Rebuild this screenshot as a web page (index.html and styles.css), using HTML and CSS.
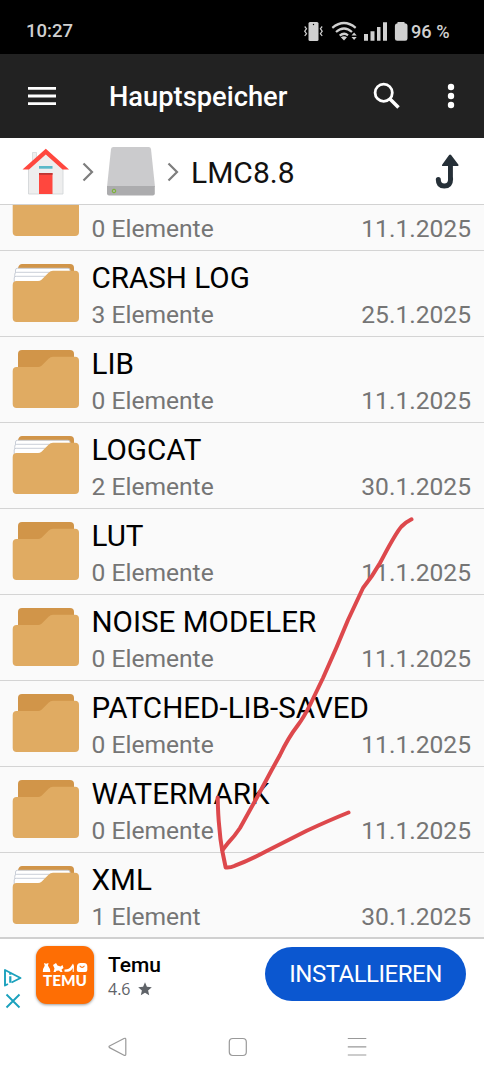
FILE: index.html
```html
<!DOCTYPE html>
<html lang="de">
<head>
  <meta charset="UTF-8">
  <meta name="viewport" content="width=device-width, initial-scale=1.0">
  <title>Hauptspeicher</title>
  <link rel="stylesheet" href="styles.css">
</head>
<body>

<!-- Icons -->
<svg class="defs" width="0" height="0">
  <symbol id="folder" viewBox="0 0 68 58">
    <path fill="#d19549" d="M6 20V4q0-4 4-4h48q4 0 4 4v14z"/>
    <path fill="#e0ab62" d="M.7 21q0-4 4-4H26q2 0 3.500-1.200l7-7Q38.500 6.700 41 6.700H63q4 0 4 4V54q0 4-4 4H4.700q-4 0-4-4z"/>
  </symbol>
  <symbol id="folder-full" viewBox="0 0 68 58">
    <path fill="#d19549" d="M6 4q1-4 4-4h48q4 0 4 4v14H6z"/>
    <path fill="#fff" stroke="#c3c8d2" stroke-width=".9" d="M3.500 20V6q0-1.700 2-1.700H56q2 0 2 2v10z"/>
    <path fill="#fff" stroke="#c3c8d2" stroke-width=".9" d="M2.800 21V10q0-1.700 2-1.700H50v6z"/>
    <path fill="#fff" stroke="#c3c8d2" stroke-width=".9" d="M2.200 21V14q0-1.700 2-1.700H40v6z"/>
    <path fill="#e0ab62" d="M.7 21q0-4 4-4H26q2 0 3.500-1.200l7-7Q38.500 6.700 41 6.700H63q4 0 4 4V54q0 4-4 4H4.700q-4 0-4-4z"/>
  </symbol>
</svg>

<div class="phone">
  <div class="status">
    <span class="time">10:27</span>
    <svg class="status-icons" width="106" height="22" viewBox="302 20 106 22" fill="#d0d0d0">
      <rect x="308.500" y="22" width="10" height="19" rx="1.500"/>
      <circle cx="313.500" cy="24.500" r=".7" fill="#000"/>
      <path fill="none" stroke="#d0d0d0" stroke-width="1.200" d="M304.700 26.500l1.800 2.200-1.800 2.500 1.800 2.500-1.800 2.300M322.200 26.500l-1.800 2.200 1.800 2.500-1.800 2.500 1.800 2.300"/>
      <g fill="none" stroke="#d0d0d0" stroke-width="2.200">
        <path d="M332.300 27.800Q344 18.200 355.700 27.800"/>
        <path d="M336 32Q344 25 352 32"/>
        <path d="M339.700 35.700Q344 32 348 35.300"/>
      </g>
      <path d="M340.800 37.300q3.200-2.300 6.200 0L344 40.500zM351.500 35.500l2.600-3 2.600 3zM351.500 37l2.600 3 2.600-3z"/>
      <path d="M364 34h4v6.700h-4zM370.500 31.300h4v9.400h-4zM377 27h3.500v13.700H377zM383 22.300h4v18.400h-4z"/>
      <path d="M397.500 22h7v1.300q3 .2 3 2.500V38.500q0 2.300-2.300 2.300h-8q-2.300 0-2.300-2.300V25.800q0-2.300 2.600-2.500z"/>
    </svg>
    <span class="battery">96 %</span>
  </div>

  <div class="appbar">
    <svg class="menu" width="28" height="20" fill="#fff"><path d="M0 1h28v2.800H0zM0 8.600h28v2.800H0zM0 16.200h28V19H0z"/></svg>
    <h1>Hauptspeicher</h1>
    <svg class="search" width="28" height="28" viewBox="0 0 28 28" fill="none" stroke="#fff">
      <circle cx="10.700" cy="10.700" r="8.600" stroke-width="2.800"/>
      <path stroke-width="3.500" d="M16.500 16.500l9 9"/>
    </svg>
    <svg class="more" width="8" height="26" fill="#fff"><circle cx="4" cy="4" r="3.200"/><circle cx="4" cy="13" r="3.200"/><circle cx="4" cy="22" r="3.200"/></svg>
  </div>

  <div class="path">
    <svg class="home" width="48" height="48" viewBox="22 147 48 48">
      <path fill="#eee" stroke="#cfd3d6" stroke-width=".7" d="M32.500 164v-11.500h4V160z"/>
      <path fill="#eee" stroke="#cfd3d6" stroke-width=".8" d="M28.500 194v-26L45.800 153 63 168v26z"/>
      <path fill="#ff473e" d="M45.800 148.700L69 169.500h-6.500L45.800 154.500 29 169.500h-6.500z"/>
      <path fill="#ff473e" d="M39 173h13.500v21H39z"/>
      <path fill="#bd3532" d="M39 173h13.500v1.800H39z"/>
      <path fill="#59b9c9" d="M39 166h13.500v2.700H39z"/>
    </svg>
    <svg class="arrow" width="12" height="20" fill="none" stroke="#7e7e7e" stroke-width="2.200"><path d="M1.500 1.500L10 10l-8.500 8.500"/></svg>
    <svg class="disk" width="50" height="50" viewBox="0 0 50 50">
      <path fill="#cbcbcd" d="M5 2q.3-2 2.300-2h35.400q2 0 2.300 2l4 38H1z"/>
      <path fill="#acacae" d="M1 39h47.800v7.500q0 2-2 2H3q-2 0-2-2z"/>
      <circle cx="8" cy="44" r="1.800" fill="#a9b69b" stroke="#77b32e" stroke-width="1"/>
    </svg>
    <svg class="arrow" width="12" height="20" fill="none" stroke="#7e7e7e" stroke-width="2.200"><path d="M1.500 1.500L10 10l-8.500 8.500"/></svg>
    <span class="current">LMC8.8</span>
    <svg class="up" width="24" height="36" viewBox="435 153 24 36">
      <path fill="none" stroke="#263038" stroke-width="5" stroke-linecap="round" d="M438.300 179.500q0 6.500 6 6.500 6.300 0 6.300-7"/>
      <path fill="#263038" d="M448 180v-14h-5.300q-1.200-.2-.4-1.400l6.800-9.600q1-1 2 0l7.200 9.600q.7 1.200-.5 1.400h-4.900v14z"/>
    </svg>
  </div>

  <div class="list">
    <div class="row">
      <svg class="folder"><use href="#folder"/></svg>
      <div class="info"><h3></h3><p><span>0 Elemente</span><span class="date">11.1.2025</span></p></div>
    </div>
    <div class="row">
      <svg class="folder"><use href="#folder-full"/></svg>
      <div class="info"><h3>CRASH LOG</h3><p><span>3 Elemente</span><span class="date">25.1.2025</span></p></div>
    </div>
    <div class="row">
      <svg class="folder"><use href="#folder"/></svg>
      <div class="info"><h3>LIB</h3><p><span>0 Elemente</span><span class="date">11.1.2025</span></p></div>
    </div>
    <div class="row">
      <svg class="folder"><use href="#folder-full"/></svg>
      <div class="info"><h3>LOGCAT</h3><p><span>2 Elemente</span><span class="date">30.1.2025</span></p></div>
    </div>
    <div class="row">
      <svg class="folder"><use href="#folder"/></svg>
      <div class="info"><h3>LUT</h3><p><span>0 Elemente</span><span class="date">11.1.2025</span></p></div>
    </div>
    <div class="row">
      <svg class="folder"><use href="#folder"/></svg>
      <div class="info"><h3>NOISE MODELER</h3><p><span>0 Elemente</span><span class="date">11.1.2025</span></p></div>
    </div>
    <div class="row">
      <svg class="folder"><use href="#folder"/></svg>
      <div class="info"><h3>PATCHED-LIB-SAVED</h3><p><span>0 Elemente</span><span class="date">11.1.2025</span></p></div>
    </div>
    <div class="row">
      <svg class="folder"><use href="#folder"/></svg>
      <div class="info"><h3>WATERMARK</h3><p><span>0 Elemente</span><span class="date">11.1.2025</span></p></div>
    </div>
    <div class="row">
      <svg class="folder"><use href="#folder-full"/></svg>
      <div class="info"><h3>XML</h3><p><span>1 Element</span><span class="date">30.1.2025</span></p></div>
    </div>
  </div>

  <div class="ad">
    <div class="ad-marks">
      <svg width="19" height="20" viewBox="0 0 19 20" fill="none" stroke="#1ba1bd" stroke-width="1.900"><path stroke-linejoin="round" d="M5 16L2 17.500V2l15.500 8-9 4.500"/><path stroke-width="2.200" d="M7.300 8.300v6.500M7.300 4.800v2"/></svg>
      <svg width="16" height="16" viewBox="0 0 16 16" fill="none" stroke="#1ba1bd" stroke-width="1.900"><path d="M1.500 1.500l13 13M14.500 1.500l-13 13"/></svg>
    </div>
    <div class="temu">
      <svg width="46" height="11" viewBox="0 0 46 11" fill="#fff">
        <path d="M2 1l2.200.8L6.500 1 6 3.800q2.500 3 2.300 6.200H.8Q.6 6.800 2.700 3.800z"/>
        <path d="M11 3l3-2 1.500 2.500 3 1 2-1.500 1 3-2 1.500 1 2.500h-2l-1.500-1.500-2.500.2L13.500 10h-2l1-3.500z"/>
        <path d="M22.500 9.800V7.500q4.500.3 6.500-3L31 1.500l1 2.500-.3 6h-1V6q-2 3.800-5 3.800z"/>
        <path fill-rule="evenodd" d="M35 4q.5-3 3.500-3H42q3 0 3.300 3v4q0 2-2 2h-6.500q-2 0-2-2zM37.300 4q2.800 4 5.600 0l-.8-.4q-2 2.400-4 0z"/>
      </svg>
      <b>TEMU</b>
    </div>
    <div class="ad-text">
      <div class="ad-name">Temu</div>
      <div class="ad-rate">4.6 <svg width="14" height="14" viewBox="0 0 14 14" fill="#5f6368"><path d="M7 .3l1.900 4.500 4.900.4-3.700 3.200 1.100 4.900L7 10.700l-4.200 2.600 1.100-4.900L.2 5.200l4.900-.4z"/></svg></div>
    </div>
    <button class="install">INSTALLIEREN</button>
  </div>

  <div class="nav">
    <svg width="20" height="20" viewBox="0 0 20 20" fill="none" stroke="#999" stroke-width="1.200"><path stroke-linejoin="round" d="M1.500 9q-1 .8 0 1.600l14.500 7.600q1.800.7 1.800-1V2.500q0-1.800-1.800-1z"/></svg>
    <svg width="20" height="20" fill="none" stroke="#999" stroke-width="1.200"><rect x="1.300" y="1.500" width="17" height="17" rx="3.500"/></svg>
    <svg width="20" height="20" fill="none" stroke="#999" stroke-width="1.200"><path d="M.8 1.500h18.500M.8 9.800h18.500M.8 18h18.500"/></svg>
  </div>

  <!-- Roter Pfeil -->
  <svg class="pen" width="484" height="1080" fill="none" stroke="#dd484c" stroke-width="4" stroke-linecap="round" stroke-linejoin="round">
    <path d="M411.500 519.300Q406 522 401.500 526.500C395 534 388 548 380 563Q372 577 363 588L348 620 336.700 647 323 678 310 705Q304 717 298 725 288 738 280 755L271.700 770 256.700 798 240 828Q234 837 228 843L222.500 850"/>
    <path d="M217.700 797.500Q218 815 219.300 827 220 838 222.300 851L225.700 867.500Q230 868 235 865.700 250 860 266.700 851L306.700 830.700Q330 820 348.500 812.500"/>
  </svg>
</div>

</body>
</html>
```
FILE: styles.css
```css
* { margin: 0; padding: 0; box-sizing: border-box; font-family: Roboto, sans-serif; }
body { background: #fff; color: #000; }
svg { display: block; flex-shrink: 0; }
.defs { position: absolute; }

.phone {
  position: relative;
  width: 484px;
  height: 1080px;
  overflow: hidden;
  display: flex;
  flex-direction: column;
}

.status {
  height: 54px;
  background: #000;
  color: #d0d0d0;
  display: flex;
  align-items: center;
  padding: 8px 33px 0 26px;
  font-size: 18.5px;
  font-weight: 500;
}
.status-icons { margin-left: auto; }
.battery { margin-left: 3px; width: 40px; white-space: nowrap; font-size: 18.2px; }

.appbar {
  height: 84px;
  background: #222;
  color: #fff;
  display: flex;
  align-items: center;
  padding: 0 29px 0 28px;
}
.appbar h1 { margin: 2px 0 0 53px; font-size: 27.3px; font-weight: 500; }
.search { margin: -1px 0 0 auto; }
.more { margin-left: 46px; }

.path {
  height: 67px;
  background: #fff;
  border-bottom: 1px solid #d2d2d2;
  display: flex;
  align-items: center;
  padding: 0 25px 0 22px;
}
.arrow { margin: 2px 12px 0; }
.disk { margin: 1px -.5px 0; }
.current { font-size: 30px; color: #111; margin-top: 2px; }
.up { margin-left: auto; }

.list { height: 732px; overflow: hidden; background: #fafafa; }
.row {
  height: 86px;
  display: flex;
  border-bottom: 1px solid #d4d4d4;
  padding: 13px 13px 0 12px;
}
.row:first-child { margin-top: -40px; }
.folder { width: 68px; height: 58px; }
.info { flex: 1; margin-left: 11.5px; }
.info h3 { height: 30px; margin-top: -2px; line-height: 32px; font-size: 29.6px; font-weight: 400; white-space: nowrap; }
.info p { display: flex; justify-content: space-between; margin-top: 9px; line-height: 28px; font-size: 24.6px; color: #757575; }

.ad {
  height: 76px;
  border-top: 2px solid #d0d0d0;
  display: flex;
  padding: 0 18px 0 3px;
}
.ad-marks { width: 33px; padding-top: 29px; }
.ad-marks svg + svg { margin: 5px 0 0 2px; }
.temu {
  width: 58px;
  height: 58px;
  margin-top: 7px;
  padding-top: 16px;
  border-radius: 11px;
  background: #fe6e04;
  color: #fff;
  box-shadow: 0 1px 3px rgba(0, 0, 0, 0.4);
  display: flex;
  flex-direction: column;
  align-items: center;
}
.temu b { font: 900 15.3px/15px Lato, sans-serif; }
.ad-text { margin: 13px 0 0 14px; }
.ad-name { font-size: 21px; line-height: 26px; font-weight: 500; }
.ad-rate { display: flex; align-items: center; gap: 7px; font: 16px/22px "Open Sans", sans-serif; color: #5f6368; }
.install {
  width: 201px;
  height: 54px;
  margin: 8px 0 0 auto;
  border: none;
  border-radius: 27px;
  background: #0b57d0;
  color: #fff;
  font-size: 24px;
  letter-spacing: -0.5px;
}

.nav { display: flex; justify-content: space-between; padding: 24px 117px 0 108px; }

.pen { position: absolute; top: 0; left: 0; pointer-events: none; }
```
